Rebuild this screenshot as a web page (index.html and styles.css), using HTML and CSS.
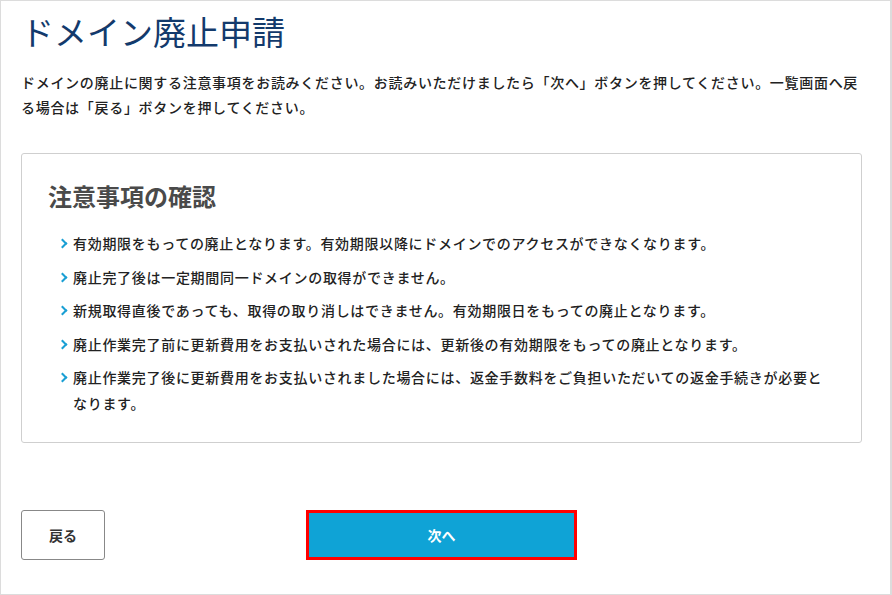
FILE: index.html
```html
<!DOCTYPE html>
<html lang="ja">
<head>
  <meta charset="UTF-8" />
  <meta name="viewport" content="width=device-width, initial-scale=1.0"/>
  <title>ドメイン廃止申請</title>
  <link rel="stylesheet" href="styles.css">
</head>
<body>
  <div class="frame">
    <h1>ドメイン廃止申請</h1>
    <p class="lead">ドメインの廃止に関する注意事項をお読みください。お読みいただけましたら「次へ」ボタンを押してください。一覧画面へ戻る場合は「戻る」ボタンを押してください。</p>

    <div class="notice">
      <h2>注意事項の確認</h2>
      <ul class="list">
        <li>有効期限をもっての廃止となります。有効期限以降にドメインでのアクセスができなくなります。</li>
        <li>廃止完了後は一定期間同一ドメインの取得ができません。</li>
        <li>新規取得直後であっても、取得の取り消しはできません。有効期限日をもっての廃止となります。</li>
        <li>廃止作業完了前に更新費用をお支払いされた場合には、更新後の有効期限をもっての廃止となります。</li>
        <li>廃止作業完了後に更新費用をお支払いされました場合には、返金手数料をご負担いただいての返金手続きが必要となります。</li>
      </ul>
    </div>

    <div class="actions">
      <button class="btn back">戻る</button>
      <button class="btn next">次へ</button>
    </div>
  </div>
</body>
</html>
```

FILE: styles.css
```css
* {
  box-sizing: border-box;
}
body {
  margin: 0;
  font-family: "Noto Sans CJK JP", "Noto Sans", sans-serif;
  color: #222;
  background: #fff;
}
.frame {
  width: 892px;
  height: 595px;
  border: 1px solid #dcdcdc;
  border-right-width: 2px;
  padding: 0 28px 0 20px;
}
h1 {
  margin: 0;
  padding-top: 7px;
  font-size: 33px;
  font-weight: normal;
  line-height: 46px;
  color: #133a6c;
}
.lead {
  margin: 16px 0 0;
  font-size: 14px;
  font-weight: 500;
  line-height: 25px;
  letter-spacing: 0.7px;
}
.notice {
  margin-top: 33px;
  border: 1px solid #cfcfcf;
  border-radius: 3px;
  padding: 22px 26px 18px 26px;
}
h2 {
  margin: 0 0 14px;
  font-size: 24px;
  line-height: 40px;
  color: #4a4a4a;
}
.list {
  margin: 0;
  padding: 0;
  list-style: none;
}
.list li {
  position: relative;
  padding-left: 25px;
  margin-bottom: 7.5px;
  font-size: 14px;
  font-weight: 500;
  line-height: 26px;
  letter-spacing: 0.7px;
}
.list li::before {
  content: "";
  position: absolute;
  left: 11px;
  top: 10px;
  width: 5px;
  height: 5px;
  border-top: 2px solid #1a9fd4;
  border-right: 2px solid #1a9fd4;
  transform: rotate(45deg);
}
.actions {
  display: flex;
  align-items: center;
  margin-top: 67px;
}
.btn {
  height: 50px;
  font-family: inherit;
  font-size: 14px;
  font-weight: bold;
  cursor: pointer;
}
.back {
  width: 84px;
  background: #fff;
  color: #333;
  border: 1px solid #888;
  border-radius: 3px;
}
.next {
  width: 271px;
  margin-left: 201px;
  background: #0fa3d6;
  color: #fff;
  border: 3px solid #f00;
}
.next:hover {
  background: #0b8fbd;
}
```
